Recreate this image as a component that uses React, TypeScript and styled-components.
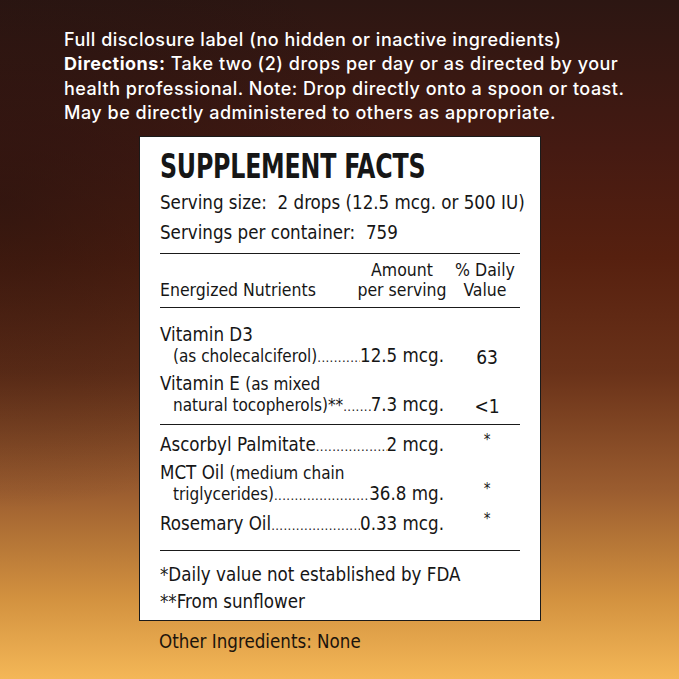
import React from 'react';
import styled, { createGlobalStyle } from 'styled-components';

const GlobalStyle = createGlobalStyle`
	html, body {
		margin: 0;
		padding: 0;
	}
	body {
		width: 679px;
		height: 679px;
		overflow: hidden;
	}
`;

const condensed = `'DejaVu Sans', sans-serif`;

const Page = styled.div`
	width: 679px;
	height: 679px;
	box-sizing: border-box;
	padding-top: 28px;
	background:
		radial-gradient(ellipse 60% 45% at 0% 30%, rgba(30, 16, 14, 0.55), rgba(30, 16, 14, 0) 100%),
		linear-gradient(180deg, #2c1612 0%, #451a12 22%, #56200f 38%, #6a3219 55%, #9a5c2f 72%, #d2913f 88%, #f4b757 100%);
	display: flex;
	flex-direction: column;
`;

const Intro = styled.p`
	margin: 0 0 0 64px;
	color: #ffffff;
	font-family: Inter, 'Open Sans', sans-serif;
	font-weight: 500;
	font-size: 18px;
	line-height: 24.3px;
	letter-spacing: 0.5px;
	white-space: nowrap;

	> b {
		font-weight: 700;
	}
`;

const Card = styled.section`
	margin: 11px 0 0 139px;
	width: 402px;
	box-sizing: border-box;
	background: #fff;
	border: 1.5px solid #1a1a1a;
	padding: 9px 20px 5px 20px;
	font-family: ${condensed};
	font-stretch: condensed;
	color: #161616;
`;

/* the label's display face is much narrower than anything installed */
const Title = styled.h1`
	margin: 0;
	font-family: ${condensed};
	font-stretch: condensed;
	font-weight: 700;
	font-size: 33px;
	line-height: 42px;
	letter-spacing: -0.3px;
	white-space: nowrap;
	transform: scaleX(0.8);
	transform-origin: left center;
`;

const InfoLine = styled.div`
	font-size: 18.6px;
	line-height: 30px;
	white-space: nowrap;
`;

const Rule = styled.hr<{ $gap?: number }>`
	margin: ${p => p.$gap ?? 6}px 0 0 0;
	border: none;
	border-top: 1.6px solid #1a1a1a;
`;

const HeaderRow = styled.div`
	display: grid;
	grid-template-columns: 1fr 100px 66px;
	align-items: end;
	font-size: 17.5px;
	line-height: 20px;
	padding: 6px 0 7px 0;
`;

const HeaderCell = styled.div<{ $center?: boolean }>`
	text-align: ${p => (p.$center ? 'center' : 'left')};
	padding-right: ${p => (p.$center ? '4px' : '0')};
	white-space: nowrap;
`;

const Group = styled.div<{ $top: number; $bottom: number }>`
	padding: ${p => p.$top}px 0 ${p => p.$bottom}px 0;
	display: flex;
	flex-direction: column;
	gap: 6px;
`;

const Nutrient = styled.div`
	display: grid;
	grid-template-columns: 1fr 66px;
	align-items: end;
`;

const NameBlock = styled.div`
	display: flex;
	flex-direction: column;
	min-width: 0;
`;

const NameLine = styled.div`
	font-size: 18.6px;
	line-height: 20px;
	white-space: nowrap;
`;

const Small = styled.span`
	font-size: 17px;
`;

const LeaderLine = styled.div<{ $indent?: boolean }>`
	display: flex;
	align-items: baseline;
	padding-left: ${p => (p.$indent ? '13px' : '0')};
	font-size: 18.6px;
	line-height: 21px;
	white-space: nowrap;
`;

const Lead = styled.span`
	flex-shrink: 0;
`;

const Dots = styled.span`
	flex: 1;
	overflow: hidden;
	font-size: 13px;
	letter-spacing: 0.4px;
	&::after {
		content: '........................................................................';
	}
`;

const Amount = styled.span`
	flex-shrink: 0;
	padding-right: 10px;
`;

const Daily = styled.div<{ $star?: boolean }>`
	text-align: center;
	font-size: ${p => (p.$star ? '15px' : '19px')};
	line-height: ${p => (p.$star ? '15px' : '21px')};
	padding-bottom: ${p => (p.$star ? '9px' : '0')};
`;

const Notes = styled.div`
	padding-top: 10px;
	font-size: 18.6px;
	line-height: 27px;
`;

const Other = styled.div`
	margin: 9px 0 0 159px;
	font-family: ${condensed};
	font-stretch: condensed;
	font-size: 18.6px;
	line-height: 24px;
	color: #1c140c;
`;

interface Row {
	name: React.ReactNode;
	lead: React.ReactNode;
	amount: string;
	dv: string;
	indent?: boolean;
}

const vitamins: Row[] = [
	{
		name: 'Vitamin D3',
		lead: <Small>(as cholecalciferol)</Small>,
		amount: '12.5 mcg.',
		dv: '63',
		indent: true,
	},
	{
		name: (
			<>
				Vitamin E <Small>(as mixed</Small>
			</>
		),
		lead: <Small>natural tocopherols)**</Small>,
		amount: '7.3 mcg.',
		dv: '<1',
		indent: true,
	},
];

const others: Row[] = [
	{ name: null, lead: 'Ascorbyl Palmitate', amount: '2 mcg.', dv: '*' },
	{
		name: (
			<>
				MCT Oil <Small>(medium chain</Small>
			</>
		),
		lead: <Small>triglycerides)</Small>,
		amount: '36.8 mg.',
		dv: '*',
		indent: true,
	},
	{ name: null, lead: 'Rosemary Oil', amount: '0.33 mcg.', dv: '*' },
];

const NutrientRow = ({ row }: { row: Row }) => (
	<Nutrient>
		<NameBlock>
			{row.name ? <NameLine>{row.name}</NameLine> : null}
			<LeaderLine $indent={row.indent}>
				<Lead>{row.lead}</Lead>
				<Dots />
				<Amount>{row.amount}</Amount>
			</LeaderLine>
		</NameBlock>
		<Daily $star={row.dv === '*'}>{row.dv}</Daily>
	</Nutrient>
);

export default function App() {
	return (
		<Page>
			<GlobalStyle />
			<Intro>
				Full disclosure label (no hidden or inactive ingredients)
				<br />
				<b>Directions:</b> Take two (2) drops per day or as directed by your
				<br />
				health professional. Note: Drop directly onto a spoon or toast.
				<br />
				May be directly administered to others as appropriate.
			</Intro>
			<Card>
				<Title>SUPPLEMENT FACTS</Title>
				<InfoLine>Serving size:&nbsp; 2 drops (12.5 mcg. or 500 IU)</InfoLine>
				<InfoLine>Servings per container:&nbsp; 759</InfoLine>
				<Rule $gap={5} />
				<HeaderRow>
					<HeaderCell>Energized Nutrients</HeaderCell>
					<HeaderCell $center>
						Amount
						<br />
						per serving
					</HeaderCell>
					<HeaderCell $center>
						% Daily
						<br />
						Value
					</HeaderCell>
				</HeaderRow>
				<Rule $gap={0} />
				<Group $top={17} $bottom={7}>
					{vitamins.map((r, i) => (
						<NutrientRow key={i} row={r} />
					))}
				</Group>
				<Rule $gap={0} />
				<Group $top={8} $bottom={14}>
					{others.map((r, i) => (
						<NutrientRow key={i} row={r} />
					))}
				</Group>
				<Rule $gap={0} />
				<Notes>
					*Daily value not established by FDA
					<br />
					**From sunflower
				</Notes>
			</Card>
			<Other>Other Ingredients: None</Other>
		</Page>
	);
}
